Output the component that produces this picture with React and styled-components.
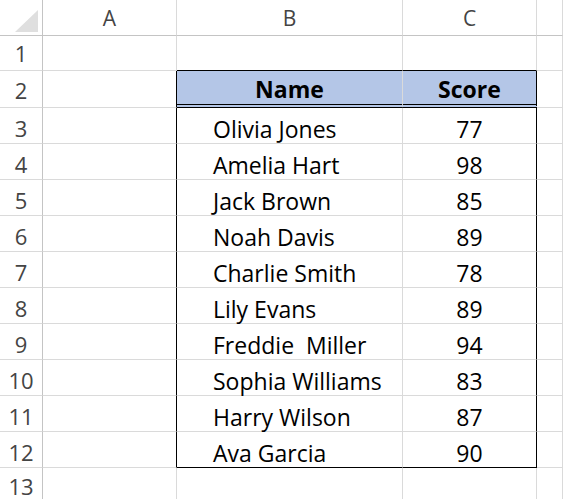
import React from 'react'
import styled, { createGlobalStyle } from 'styled-components'

const GlobalStyle = createGlobalStyle`
  html, body {
    margin: 0;
    padding: 0;
    background: #ffffff;
    overflow: hidden;
  }
`

const GRID = '#dadada'
const HEAD_LINE = '#c4c4c4'
const INK = '#000000'

const Sheet = styled.div`
  display: grid;
  grid-template-columns: 43px 134px 226px 134px 1fr;
  grid-template-rows: 36px 35px 37px;
  grid-auto-rows: 36px;
  width: 563px;
  font-family: 'Open Sans', Lato, sans-serif;
  font-size: 23px;
  line-height: 23px;
  color: #000;
`

const Corner = styled.div`
  position: relative;
  box-sizing: border-box;
  border-right: 1px solid ${HEAD_LINE};
  border-bottom: 1px solid ${HEAD_LINE};
`

const CornerTriangle = styled.svg`
  position: absolute;
  left: 14px;
  top: 10px;
`

const ColHead = styled.div`
  box-sizing: border-box;
  display: flex;
  align-items: flex-end;
  justify-content: center;
  padding-bottom: 6px;
  border-right: 1px solid ${GRID};
  border-bottom: 1px solid ${HEAD_LINE};
  color: #444;
  font-size: 21px;
  line-height: 21px;
`

const RowHead = styled.div`
  box-sizing: border-box;
  display: flex;
  align-items: flex-end;
  justify-content: center;
  padding-bottom: ${({ $high }) => ($high ? '6px' : '4px')};
  border-right: 1px solid ${HEAD_LINE};
  border-bottom: 1px solid ${GRID};
  color: #444;
  font-size: 22px;
  line-height: 22px;
`

const Cell = styled.div`
  box-sizing: border-box;
  display: flex;
  align-items: flex-end;
  justify-content: ${({ $align }) => ($align === 'center' ? 'center' : 'flex-start')};
  padding: 0 0 ${({ $double }) => ($double ? '3px' : '2px')} ${({ $indent }) => ($indent ? '36px' : '0')};
  background: ${({ $fill }) => ($fill ? '#b4c6e7' : 'transparent')};
  font-weight: ${({ $bold }) => ($bold ? 700 : 400)};
  white-space: pre;
  border-right: 1px solid ${({ $edgeRight }) => ($edgeRight ? INK : GRID)};
  border-bottom: ${({ $double, $edgeBottom }) =>
    $double ? `4px double ${INK}` : `1px solid ${$edgeBottom ? INK : GRID}`};
`

const people = [
  ['Olivia Jones', 77],
  ['Amelia Hart', 98],
  ['Jack Brown', 85],
  ['Noah Davis', 89],
  ['Charlie Smith', 78],
  ['Lily Evans', 89],
  ['Freddie  Miller', 94],
  ['Sophia Williams', 83],
  ['Harry Wilson', 87],
  ['Ava Garcia', 90]
]

const App = () => {
  const rows = []
  // row 1 is empty; its bottom line is the top edge of the table
  rows.push(
    <React.Fragment key='r1'>
      <RowHead $high>1</RowHead>
      <Cell />
      <Cell $edgeBottom />
      <Cell $edgeBottom />
      <Cell />
    </React.Fragment>
  )
  rows.push(
    <React.Fragment key='r2'>
      <RowHead $high>2</RowHead>
      <Cell $edgeRight />
      <Cell $fill $bold $align='center' $double>Name</Cell>
      <Cell $fill $bold $align='center' $double $edgeRight>Score</Cell>
      <Cell />
    </React.Fragment>
  )
  people.forEach(([name, score], i) => {
    const last = i === people.length - 1
    rows.push(
      <React.Fragment key={name}>
        <RowHead>{i + 3}</RowHead>
        <Cell $edgeRight />
        <Cell $indent $edgeBottom={last}>{name}</Cell>
        <Cell $align='center' $edgeRight $edgeBottom={last}>{score}</Cell>
        <Cell />
      </React.Fragment>
    )
  })
  rows.push(
    <React.Fragment key='r13'>
      <RowHead $high>13</RowHead>
      <Cell />
      <Cell />
      <Cell />
      <Cell />
    </React.Fragment>
  )

  return (
    <>
      <GlobalStyle />
      <Sheet>
        <Corner>
          <CornerTriangle width='24' height='22' viewBox='0 0 24 22'>
            <polygon points='24,0 24,22 1,22' fill='#dfdfdf' />
          </CornerTriangle>
        </Corner>
        <ColHead>A</ColHead>
        <ColHead>B</ColHead>
        <ColHead>C</ColHead>
        <ColHead />
        {rows}
      </Sheet>
    </>
  )
}

export default App
